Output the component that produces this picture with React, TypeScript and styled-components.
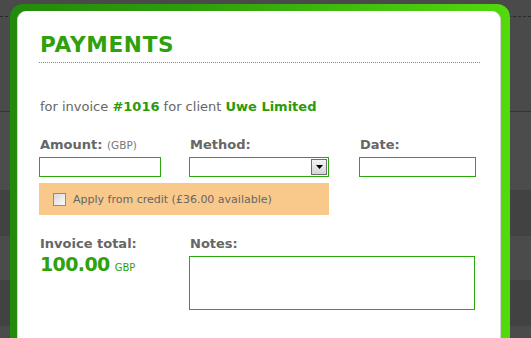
import styled, { createGlobalStyle } from "styled-components";

const GlobalStyle = createGlobalStyle`
  html, body {
    margin: 0;
    padding: 0;
    background: #4a4a4a;
    font-family: "DejaVu Sans", Verdana, sans-serif;
    overflow: hidden;
  }
`;

const Page = styled.div`
  position: relative;
  width: 531px;
  height: 338px;
  overflow: hidden;
`;

// the dimmed page behind the dialog
const Backdrop = styled.div`
  display: flex;
  flex-direction: column;
`;

const Band = styled.div<{ $h: number; $bg: string; $line?: string }>`
  height: ${(p) => p.$h}px;
  background: ${(p) => p.$bg};
  border-bottom: ${(p) => p.$line || "none"};
`;

const Frame = styled.div`
  position: absolute;
  left: 10px;
  top: 4px;
  width: 500px;
  height: 360px;
  box-sizing: border-box;
  padding: 7px 9px 0 7px;
  border-radius: 13px 13px 0 0;
  background: linear-gradient(90deg, #238a0b 0%, #2c9d0a 35%, #44c40c 75%, #52da0b 100%);
`;

const Panel = styled.div`
  height: 100%;
  box-sizing: border-box;
  background: #fff;
  border-left: 1px solid #d6d6d6;
  border-right: 1px solid #d6d6d6;
  border-radius: 9px 9px 0 0;
  padding: 21px 21px 0 21px;
`;

const Title = styled.h1`
  margin: 0;
  padding: 0 0 4px 1px;
  width: 440px;
  font-size: 21.6px;
  line-height: 26px;
  font-weight: bold;
  letter-spacing: 0.7px;
  color: #2ea10c;
  border-bottom: 1px dotted #8a8a8a;
`;

const Subtitle = styled.p`
  margin: 36px 0 0 1px;
  font-size: 13px;
  line-height: 16px;
  color: #666;

  b {
    color: #2a9a0a;
  }
`;

const FormGrid = styled.div`
  margin-top: 22px;
  display: grid;
  grid-template-columns: 150px 170px 120px;
`;

const Field = styled.div<{ $span?: number }>`
  display: flex;
  flex-direction: column;
  grid-column: span ${(p) => p.$span || 1};
`;

const Label = styled.label`
  padding-left: 1px;
  font-size: 13px;
  line-height: 16px;
  font-weight: bold;
  color: #666;

  small {
    font-weight: normal;
    font-size: 10.5px;
    color: #777;
  }
`;

const TextInput = styled.input<{ $w: number }>`
  margin-top: 4px;
  width: ${(p) => p.$w}px;
  height: 20px;
  box-sizing: border-box;
  border: 1px solid #2aa80a;
  background: #fff;
  padding: 0 3px;
  outline: none;
`;

const SelectBox = styled.div`
  margin-top: 4px;
  width: 140px;
  height: 20px;
  box-sizing: border-box;
  border: 1px solid #2aa80a;
  display: flex;
  justify-content: flex-end;
  padding: 1px;
`;

const DropButton = styled.div`
  width: 16px;
  box-sizing: border-box;
  border: 1px solid #6f6f6f;
  background: linear-gradient(#f4f4f4, #d6d6d6);
  display: flex;
  align-items: center;
  justify-content: center;
`;

const CreditBar = styled.div`
  grid-column: span 2;
  margin-top: 6px;
  width: 290px;
  height: 32px;
  box-sizing: border-box;
  background: #f8c98a;
  display: flex;
  align-items: center;
  gap: 7px;
  padding: 0 0 0 14px;
  font-size: 11px;
  color: #666;
`;

const Check = styled.span`
  width: 13px;
  height: 13px;
  box-sizing: border-box;
  border: 1px solid #8c8c8c;
  background: linear-gradient(135deg, #d8d8d8, #fbfbfb);
`;

const Spacer = styled.div`
  grid-column: 3;
`;

const Summary = styled(Field)`
  margin-top: 21px;
`;

const Total = styled.div`
  margin-top: 1px;
  padding-left: 1px;
  font-size: 19px;
  line-height: 22px;
  font-weight: bold;
  letter-spacing: -0.6px;
  color: #2ea10c;

  small {
    font-size: 10px;
    font-weight: normal;
    letter-spacing: 0;
    margin-left: 5px;
  }
`;

const Notes = styled.textarea`
  margin-top: 4px;
  width: 286px;
  height: 54px;
  box-sizing: border-box;
  border: 1px solid #2aa80a;
  resize: none;
  outline: none;
`;

const bands = [
  { h: 16, bg: "#4a4a4a", line: "1px dashed #2a2a2a" },
  { h: 94, bg: "#4a4a4a", line: "1px solid #2c3a2c" },
  { h: 78, bg: "#4c4c4c" },
  { h: 46, bg: "#424242" },
  { h: 44, bg: "#4b4b4b" },
  { h: 46, bg: "#424242" },
  { h: 30, bg: "#4b4b4b" },
];

export default function App() {
  return (
    <Page>
      <GlobalStyle />
      <Backdrop>
        {bands.map((b, i) => (
          <Band key={i} $h={b.h} $bg={b.bg} $line={b.line} />
        ))}
      </Backdrop>
      <Frame>
        <Panel>
          <Title>PAYMENTS</Title>
          <Subtitle>
            for invoice <b>#1016</b> for client <b>Uwe Limited</b>
          </Subtitle>
          <FormGrid>
            <Field>
              <Label>
                Amount: <small>(GBP)</small>
              </Label>
              <TextInput $w={122} />
            </Field>
            <Field>
              <Label>Method:</Label>
              <SelectBox>
                <DropButton>
                  <svg width="7" height="4" viewBox="0 0 7 4">
                    <path d="M0 0h7L3.5 4z" fill="#000" />
                  </svg>
                </DropButton>
              </SelectBox>
            </Field>
            <Field>
              <Label>Date:</Label>
              <TextInput $w={117} />
            </Field>
            <CreditBar>
              <Check />
              Apply from credit (£36.00 available)
            </CreditBar>
            <Spacer />
            <Summary>
              <Label>Invoice total:</Label>
              <Total>
                100.00<small>GBP</small>
              </Total>
            </Summary>
            <Summary $span={2}>
              <Label>Notes:</Label>
              <Notes />
            </Summary>
          </FormGrid>
        </Panel>
      </Frame>
    </Page>
  );
}
